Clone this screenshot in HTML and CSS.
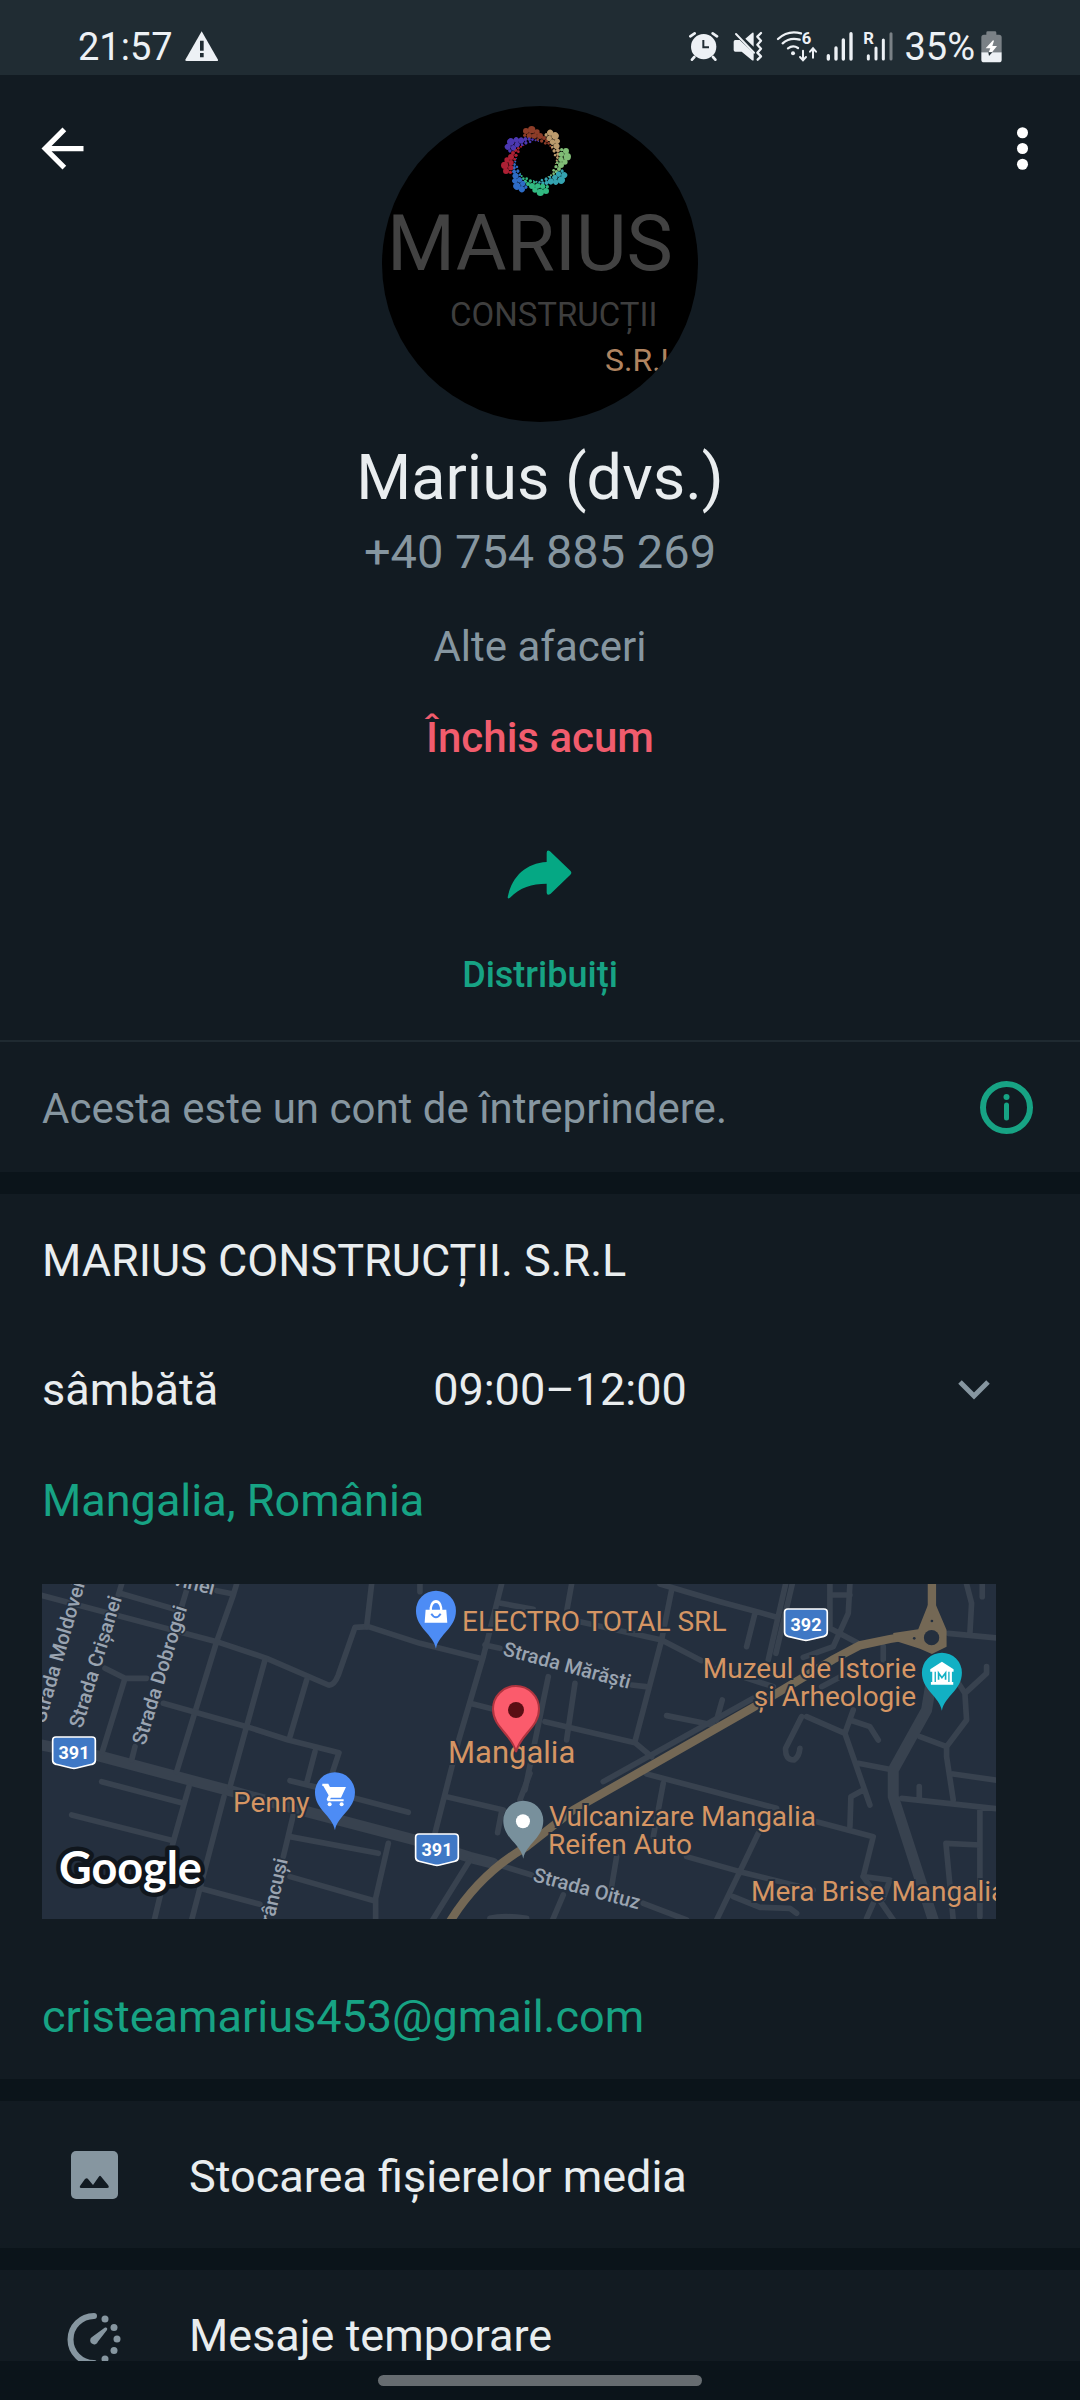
FILE: index.html
```html
<!DOCTYPE html>
<html lang="ro">
<head>
    <meta charset="utf-8">
    <meta name="viewport" content="width=device-width, initial-scale=1">
    <title>Marius (dvs.)</title>
    <link rel="stylesheet" href="styles.css">
</head>
<body>
    <!-- Status bar -->
    <header class="status-bar">
        <div class="status-left">
            <span>21:57</span>
            <svg width="34" height="31" viewBox="536 93 102 93"><path fill="#edf1f5" d="M586 94 635 179q2 4-3 4H541q-5 0-4-4Z"/><path fill="#202c33" d="M581 122h11v30h-11zM581 159h11v13h-11z"/></svg>
        </div>
        <div class="status-right">
            <svg width="34" height="32" viewBox="88 92 102 96">
                <circle cx="132" cy="139" r="38" fill="#edf1f5"/>
                <path d="M92 108 105 99M172 108 159 99M104 170 97 178M160 170 167 178" stroke="#edf1f5" stroke-width="8" stroke-linecap="round"/>
                <path d="M131 119V141H148" fill="none" stroke="#202c33" stroke-width="6"/>
            </svg>
            <svg width="33" height="32" viewBox="220 92 99 96" fill="#edf1f5">
                <path d="M222 124q0-5 5-5h13L282 158V178q0 4-5 2L246 154H227q-5 0-5-5ZM257 115 278 97q4-2 4 3v39Z"/>
                <path d="M229 101 283 157" stroke="#edf1f5" stroke-width="6" stroke-linecap="round"/>
                <path d="M304 98 293 109 304 121 293 133 304 145 293 157 304 168 294 178" fill="none" stroke="#edf1f5" stroke-width="7" stroke-linejoin="round" stroke-linecap="round"/>
            </svg>
            <svg width="41" height="32" viewBox="349 92 123 96" class="spill" fill="none" stroke="#edf1f5" stroke-width="7" stroke-linecap="round">
                <path d="M355 116Q385 88 424 99M369 129Q390 110 420 118M385 144Q400 133 415 143"/>
                <circle cx="400" cy="159" r="6" fill="#edf1f5" stroke="none"/>
                <path d="M430 151V178M421 170 430 180 439 170M460 172V146M451 154 460 144 469 154" stroke-width="6"/>
                <text x="426" y="132" class="tiny-mark">6</text>
            </svg>
            <svg width="26" height="32" viewBox="502 92 78 96" class="spill" stroke="#edf1f5" stroke-width="10" stroke-linecap="round">
                <path d="M506 166V176M529 143V176M551 119V176M574 100V176"/>
            </svg>
            <svg width="31" height="32" viewBox="610 92 93 96" class="spill" stroke="#edf1f5" stroke-width="9" stroke-linecap="round">
                <path d="M626 166V176M649 143V176M671 119V176"/><path d="M694 100V176" stroke="#7a8186"/>
                <text x="611" y="132" class="tiny-mark">R</text>
            </svg>
            <span class="battery">35%
                <svg width="21" height="32" viewBox="965 92 63 96">
                    <path fill="#7a8186" d="M981 97q0-4 4-4h22q4 0 4 4v6h8q8 0 8 8v45h-61v-45q0-8 8-8h7Z"/>
                    <path fill="#edf1f5" d="M966 156h61v22q0 8-8 8h-45q-8 0-8-8Z"/>
                    <path fill="#fff" d="M1001 120 979 144H993L988 156H998L1013 137H999L1004 121Z"/>
                    <path fill="#202c33" d="M987 156H999L989 167Z"/>
                </svg>
            </span>
        </div>
    </header>

    <main class="content">
        <!-- Profile -->
        <section class="profile">
            <button class="icon-btn back" aria-label="Înapoi">
                <svg width="63" height="63" viewBox="0 0 24 24"><path fill="#fff" d="M20 11H7.830l5.590-5.590L12 4l-8 8 8 8 1.410-1.410L7.830 13H20v-2z"/></svg>
            </button>
            <button class="icon-btn more" aria-label="Mai multe opțiuni">
                <svg width="63" height="63" viewBox="0 0 24 24" fill="#fff"><circle cx="12" cy="6" r="2.100"/><circle cx="12" cy="12" r="2.100"/><circle cx="12" cy="18" r="2.100"/></svg>
            </button>

            <svg class="avatar" viewBox="0 0 316 316" role="img" aria-label="Marius Construcții S.R.L">
                <defs>
                    <g id="petal">
                        <circle cx="-30" cy="-90" r="9"/><circle cx="-13" cy="-94" r="11"/><circle cx="-20" cy="-76" r="8"/>
                        <circle cx="3" cy="-87" r="8"/><circle cx="-5" cy="-75" r="8"/><circle cx="12" cy="-75" r="9"/>
                        <circle cx="-34" cy="-77" r="5"/><circle cx="5" cy="-64" r="4"/><circle cx="24" cy="-69" r="6"/>
                        <circle cx="17" cy="-60" r="5"/><circle cx="32" cy="-61" r="5"/><circle cx="38" cy="-53" r="4"/>
                        <circle cx="28" cy="-53" r="4"/><circle cx="43" cy="-45" r="3"/><circle cx="47" cy="-37" r="2"/>
                    </g>
                    <clipPath id="round"><circle cx="158" cy="158" r="158"/></clipPath>
                </defs>
                <circle cx="158" cy="158" r="158" fill="#000"/>
                <g transform="translate(154 55) scale(.333)">
                    <use href="#petal" fill="#8d3d28"/>
                    <use href="#petal" fill="#bc9b6c" transform="rotate(45)"/>
                    <use href="#petal" fill="#80bd76" transform="rotate(90)"/>
                    <use href="#petal" fill="#35a3b0" transform="rotate(135)"/>
                    <use href="#petal" fill="#32b981" transform="rotate(180)"/>
                    <use href="#petal" fill="#2e6cc6" transform="rotate(225)"/>
                    <use href="#petal" fill="#ad2034" transform="rotate(270)"/>
                    <use href="#petal" fill="#4c38b2" transform="rotate(315)"/>
                </g>
                <g clip-path="url(#round)">
                    <text class="logo-name" x="5" y="164">MARIUS</text>
                    <text class="logo-sub" x="68" y="220">CONSTRUCȚII</text>
                    <text class="logo-srl" x="223" y="265">S.R.L</text>
                </g>
            </svg>

            <h1>Marius (dvs.)</h1>
            <p class="phone">+40 754 885 269</p>
            <p class="category">Alte afaceri</p>
            <p class="closed">Închis acum</p>

            <button class="share">
                <svg width="65" height="49" viewBox="321 88 195 147"><path fill="#05a884" d="M323 230C335 168 378 127 440 124V96Q441 86 450 92L511 150Q517 156 511 162L452 219Q441 226 440 216V189C395 189 360 200 330 231Q323 236 323 230Z"/></svg>
                <span>Distribuiți</span>
            </button>
        </section>

        <section class="notice">
            <p>Acesta este un cont de întreprindere.</p>
            <button class="icon-btn" aria-label="Informații">
                <svg width="53" height="53" viewBox="0 0 53 53"><circle cx="26.500" cy="26.500" r="23.500" fill="none" stroke="#17a384" stroke-width="6"/><circle cx="26.500" cy="16" r="3" fill="#17a384"/><path d="M26.500 24V37" stroke="#17a384" stroke-width="5" stroke-linecap="round"/></svg>
            </button>
        </section>

        <!-- Business details -->
        <section class="details">
            <h2>MARIUS CONSTRUCȚII. S.R.L</h2>
            <button class="hours">
                <span>sâmbătă</span>
                <span>09:00–12:00</span>
                <svg width="44" height="44" viewBox="0 0 44 44"><path d="M8 14 22 28 36 14" fill="none" stroke="#8696a0" stroke-width="5"/></svg>
            </button>
            <a class="location" href="#harta">Mangalia, România</a>

            <svg class="map" id="harta" viewBox="0 0 954 335" role="img" aria-label="Hartă Mangalia">
                <defs>
                    <path id="pin" d="M0 114C-8 70-60 52-60 0A60 60 0 1 1 60 0C60 52 8 70 0 114Z"/>
                    <path id="shield" d="M-54-46H54Q64-46 64-36V24Q64 34 54 36L8 47Q0 49-8 47L-54 36Q-64 34-64 24V-36Q-64-46-54-46Z"/>
                </defs>
                <rect width="954" height="335" fill="#242f3e"/>
                <g transform="translate(-2 -14) scale(.3333)">
                    <g class="road">
                        <path class="wide" d="M0 524 185 560 580 665 800 725 1125 810 1290 862 1360 880"/>
                        <path d="M0 75 150 115 530 215 680 265 865 345Q882 348 895 315L945 172 985 170 1140 220 1320 265M590 42 580 75 530 215 410 605M530 62 580 72M240 70 430 125M245 42 235 75M440 60 425 110"/>
                        <path d="M675 270 570 650M800 330 750 500M195 295 255 325H320M255 325 187 545M370 400 620 470 745 510 897 548 875 615M825 545 800 640M750 632 830 652M945 685 1105 727M285 530 275 570"/>
                        <path d="M185 635 430 700M447 650 400 815 343 1050M95 735 400 812M552 680 455 1050M480 955 660 1003M760 735 730 860M750 800 1015 850M750 920 1005 993M1045 820 1007 985V1050M995 42 980 170M1140 42V65"/>
                        <path d="M1385 42 1330 260 1255 515 1185 790M1375 98 1480 118M1335 225 1380 235M1290 400 1370 420M1220 680 1390 720M1470 610 1440 690M1385 725 1373 788M1290 870 1178 1050M1360 880 1475 915M1350 1045Q1390 1035 1460 1045"/>
                    </g>
                    <g class="road" transform="translate(1440)">
                        <path d="M155 42 140 125M85 320 15 660M180 155 290 180 425 210 545 272M420 42 600 95 765 140M455 60 425 210 345 515M705 130 680 230M797 42 745 270M817 42 768 250M930 42V175L1015 220M990 42 985 130 940 230 850 262M938 75H990"/>
                        <path d="M75 455 345 518 395 560M165 340 140 510M335 345 378 350M440 437 580 465M607 390 590 450M380 612 770 715M430 640 400 800M890 755 1060 800 1030 920 1110 930 1090 985M500 860 660 905 880 960M715 790 590 1050M290 860 275 950M370 1000 500 1050M130 975 98 1050M640 980 720 1012 810 1015 830 1030"/>
                        <path d="M590 295 760 350M905 350 1000 300M860 440 975 490 1050 705M845 440 797 535Q795 570 822 570 838 560 840 535M990 450 1050 470 1075 510M1000 420 975 490M1015 580 1120 600M1030 660 993 680 990 770M1200 500 1280 530V560L1300 690M1280 530 1340 450 1335 370 1290 300M1335 370 1400 310V290M1300 612 1440 632M1145 685 1440 717M1380 715V1040M1380 825 1278 820 1300 1050M1285 190 1440 205M1340 42 1355 100 1350 190M1387 42V80M1090 230V270M1198 650V685M1030 920 1120 1050M1040 1045 1060 1000"/>
                        <path class="wide" d="M1235 330 1220 420 1120 600V680L1240 1050"/>
                        <path d="M250 635 700 385"/>
                    </g>
                    <g class="highway" transform="translate(1440)">
                        <path d="M-210 1055Q-120 910 20 830L160 720 700 412 940 268 1020 226 1110 207 1205 192M1236 42V110"/>
                        <path class="fill" d="M1224 105h24l32 75v50l-44 22-36-16-80-25v-22l75-11Z"/>
                        <circle class="island" cx="1235" cy="203" r="23"/>
                        <circle class="island" cx="1236" cy="153" r="4"/><circle class="island" cx="1183" cy="205" r="4"/>
                    </g>
                    <g fill="#3f78c5" stroke="#fff" stroke-width="5">
                        <use href="#shield" x="102" y="547"/><use href="#shield" x="1191" y="838"/><use href="#shield" x="2298" y="163"/>
                    </g>
                    <use href="#pin" x="1188" y="122" fill="#4d8cf5"/>
                    <path fill="#fff" d="M1157 119h12v-6q4-23 19-23t19 23v6h12l3 39h-68ZM1176 119h24v-5q-3-15-12-15t-12 15Z"/>
                    <path d="M1174 131q14 22 28 0" fill="none" stroke="#4d8cf5" stroke-width="6"/>
                    <use href="#pin" x="885" y="667" fill="#4d8cf5"/>
                    <path fill="#fff" d="M847 641h18l5 10h48l-15 32h-30l-3 5h41v6h-48l-3-6 6-12-16-28h-3Z"/><circle cx="869" cy="703" r="6" fill="#fff"/><circle cx="905" cy="703" r="6" fill="#fff"/>
                    <use href="#pin" x="1450" y="752" fill="#78909c"/><circle cx="1449" cy="754" r="21" fill="#fff"/>
                    <use href="#pin" x="2706" y="308" fill="#12b0c4"/>
                    <path fill="#fff" d="M2706 275 2741 298V305H2736V336H2740V344H2673V336H2677V305H2671V298Z"/>
                    <path d="M2686 305V336M2727 305V336" stroke="#12b0c4" stroke-width="4"/><path d="M2696 329V309L2706 323 2717 309V329" fill="none" stroke="#12b0c4" stroke-width="5"/>
                </g>
                <g class="place">
                    <text x="420" y="47">ELECTRO TOTAL SRL</text>
                    <text x="406" y="179" class="town">Mangalia</text>
                    <text x="191" y="228">Penny</text>
                    <text x="874" y="94" text-anchor="end">Muzeul de Istorie</text>
                    <text x="874" y="122" text-anchor="end">şi Arheologie</text>
                    <text x="507" y="242">Vulcanizare Mangalia</text>
                    <text x="506" y="270">Reifen Auto</text>
                    <text x="709" y="317">Mera Brise Mangalia</text>
                </g>
                <g transform="translate(474 126)"><path d="M0 42C-4 24-23 18-23-1A23 23 0 1 1 23-1C23 18 4 24 0 42Z" fill="#fb5b6c" stroke="#b0343f" stroke-width="2"/><circle r="8" fill="#5a0e14"/></g>
                <g class="street">
                    <text transform="translate(43 0) rotate(-74)" text-anchor="end">Strada Moldovei</text>
                    <text transform="translate(40 145) rotate(-73)">Strada Crişanei</text>
                    <text transform="translate(103 162) rotate(-73)">Strada Dobrogei</text>
                    <text transform="translate(171 11) rotate(14)" text-anchor="end">Strada Bucovinei</text>
                    <text transform="translate(246 276) rotate(-77)" text-anchor="end">Brâncuşi</text>
                    <text transform="translate(460 71) rotate(15)">Strada Mărăşti</text>
                    <text transform="translate(490 297) rotate(15)">Strada Oituz</text>
                </g>
                <g class="route">
                    <text x="32" y="175">391</text>
                    <text x="395" y="272">391</text>
                    <text x="764" y="47">392</text>
                </g>
                <text class="google" x="17" y="300">Google</text>
            </svg>

            <a class="email" href="mailto:cristeamarius453@gmail.com">cristeamarius453@gmail.com</a>
        </section>

        <button class="row">
            <svg width="66" height="66" viewBox="0 0 66 66"><rect x="9" y="9" width="47" height="48" rx="5" fill="#8696a0"/><path d="M18 44Q17 46 20 46H45Q48 46 46 43L39 34.500Q38 33 37 34.500L31 43 26 37Q25 35.500 23 37Z" fill="#121b22"/></svg>
            <span>Stocarea fișierelor media</span>
        </button>
        <button class="row row-top">
            <svg width="66" height="66" viewBox="0 0 66 66" fill="#8696a0">
                <path d="M32 10A23.500 23.500 0 0 0 32 57" fill="none" stroke="#8696a0" stroke-width="6" stroke-linecap="round"/>
                <circle cx="43" cy="13" r="3.500"/><circle cx="52" cy="21.500" r="3.500"/><circle cx="55" cy="33" r="3.500"/><circle cx="52" cy="44.500" r="3.500"/><circle cx="43" cy="53" r="3.500"/>
                <path d="M43 21.500Q46 21 45 24L36 35.500A4 4 0 1 1 30 31Z"/>
            </svg>
            <span>Mesaje temporare</span>
        </button>
    </main>

    <footer class="nav-bar"><div class="nav-pill"></div></footer>
</body>
</html>
```

FILE: styles.css
```css
* {
    box-sizing: border-box;
}

body {
    margin: 0;
    height: 100vh;
    display: flex;
    flex-direction: column;
    overflow: hidden;
    font-family: Roboto, "Noto Sans", sans-serif;
    background-color: #0b141a;
    color: #e9edef;
}

h1,
h2,
p {
    margin: 0;
    font-weight: 400;
}

svg {
    display: block;
    flex-shrink: 0;
}

button {
    padding: 0;
    border: none;
    background: none;
    font: inherit;
    color: inherit;
    text-align: left;
    cursor: pointer;
}

a {
    color: #17a384;
    text-decoration: none;
}

/* Status bar */
.status-bar {
    flex-shrink: 0;
    display: flex;
    justify-content: space-between;
    align-items: center;
    padding: 18px 78px 0;
    height: 75px;
    background-color: #202c33;
    color: #edf1f5;
    font-size: 38px;
}

.status-left {
    display: flex;
    align-items: center;
    gap: 12px;
}

.status-right {
    display: flex;
    align-items: center;
    gap: 10px;
}

.battery {
    display: flex;
    align-items: center;
    gap: 6px;
}

.spill {
    overflow: visible;
}

.tiny-mark {
    font-size: 50px;
    font-weight: 700;
    fill: #edf1f5;
    stroke: none;
}

.content {
    flex: 1;
    min-height: 0;
    overflow: hidden;
}

/* Profile */
.profile {
    position: relative;
    display: flex;
    flex-direction: column;
    align-items: center;
    padding: 31px 42px 43px;
    background-color: #121b22;
    text-align: center;
}

.back {
    position: absolute;
    top: 42px;
    left: 31px;
}

.more {
    position: absolute;
    top: 42px;
    right: 26px;
}

.avatar {
    width: 316px;
    height: 316px;
}

.logo-name {
    font-size: 78px;
    fill: #424242;
}

.logo-sub {
    font-size: 33px;
    fill: #3e3e3e;
}

.logo-srl {
    font-size: 32px;
    fill: #b08460;
}

h1 {
    margin-top: 18px;
    font-size: 63px;
    line-height: 76px;
}

.phone {
    margin-top: 6px;
    font-size: 47px;
    line-height: 60px;
    color: #8696a0;
}

.category,
.closed {
    margin-top: 39px;
    font-size: 42px;
    line-height: 52px;
    color: #8696a0;
}

.closed {
    font-weight: 500;
    color: #f15c6d;
}

.share {
    display: flex;
    flex-direction: column;
    align-items: center;
    gap: 54px;
    margin-top: 86px;
    font-size: 36px;
    font-weight: 500;
    line-height: 44px;
    color: #17a384;
}

.notice {
    display: flex;
    justify-content: space-between;
    align-items: center;
    padding: 37px 47px 36px 42px;
    border-top: 2px solid #1f2a31;
    background-color: #121b22;
    font-size: 42px;
    line-height: 54px;
    color: #8696a0;
}

.notice p {
    padding-top: 3px;
}

/* Business details */
.details {
    display: flex;
    flex-direction: column;
    align-items: flex-start;
    margin: 22px 0;
    padding: 40px 84px 35px 42px;
    background-color: #121b22;
    font-size: 45px;
    line-height: 54px;
}

h2 {
    font-size: 45px;
}

.hours {
    display: grid;
    grid-template-columns: 41% 1fr auto;
    align-items: center;
    width: 100%;
    margin-top: 75px;
}

.location {
    margin-top: 57px;
}

.email {
    margin-top: 71px;
}

/* Map */
.map {
    width: 100%;
    height: auto;
    margin-top: 56px;
}

.road path {
    fill: none;
    stroke: #38424f;
    stroke-width: 17;
    stroke-linejoin: round;
    stroke-linecap: round;
}

.road .wide {
    stroke-width: 33;
}

.highway path {
    fill: none;
    stroke: #746855;
    stroke-width: 25;
}

.highway .fill {
    fill: #746855;
    stroke: none;
}

.island {
    fill: #242f3e;
}

.place text {
    font-size: 28px;
    fill: #d59563;
    stroke: #242f3e;
    stroke-width: 4px;
    paint-order: stroke;
}

.place .town {
    font-size: 31px;
}

.street text {
    font-size: 20px;
    font-weight: 500;
    fill: #9aa4b1;
    stroke: #242f3e;
    stroke-width: 3px;
    paint-order: stroke;
}

.route text {
    font-size: 18px;
    font-weight: 700;
    text-anchor: middle;
    fill: #fff;
}

.google {
    font-family: Lato, sans-serif;
    font-size: 45px;
    font-weight: 700;
    fill: #fff;
    stroke: #10161d;
    stroke-width: 9px;
    stroke-linejoin: round;
    paint-order: stroke;
}

/* Settings rows */
.row {
    display: flex;
    align-items: center;
    gap: 61px;
    width: 100%;
    padding: 41px 62px 40px;
    margin-bottom: 22px;
    background-color: #121b22;
    font-size: 45px;
    line-height: 54px;
}

.row span {
    padding-top: 3px;
}

.row-top {
    align-items: flex-start;
    padding-top: 36px;
    margin-bottom: 0;
}

/* Gesture bar */
.nav-bar {
    flex-shrink: 0;
    display: flex;
    justify-content: center;
    padding: 14px 0;
    background-color: #0b141a;
}

.nav-pill {
    width: 30%;
    height: 11px;
    border-radius: 6px;
    background-color: #666c70;
}
```
